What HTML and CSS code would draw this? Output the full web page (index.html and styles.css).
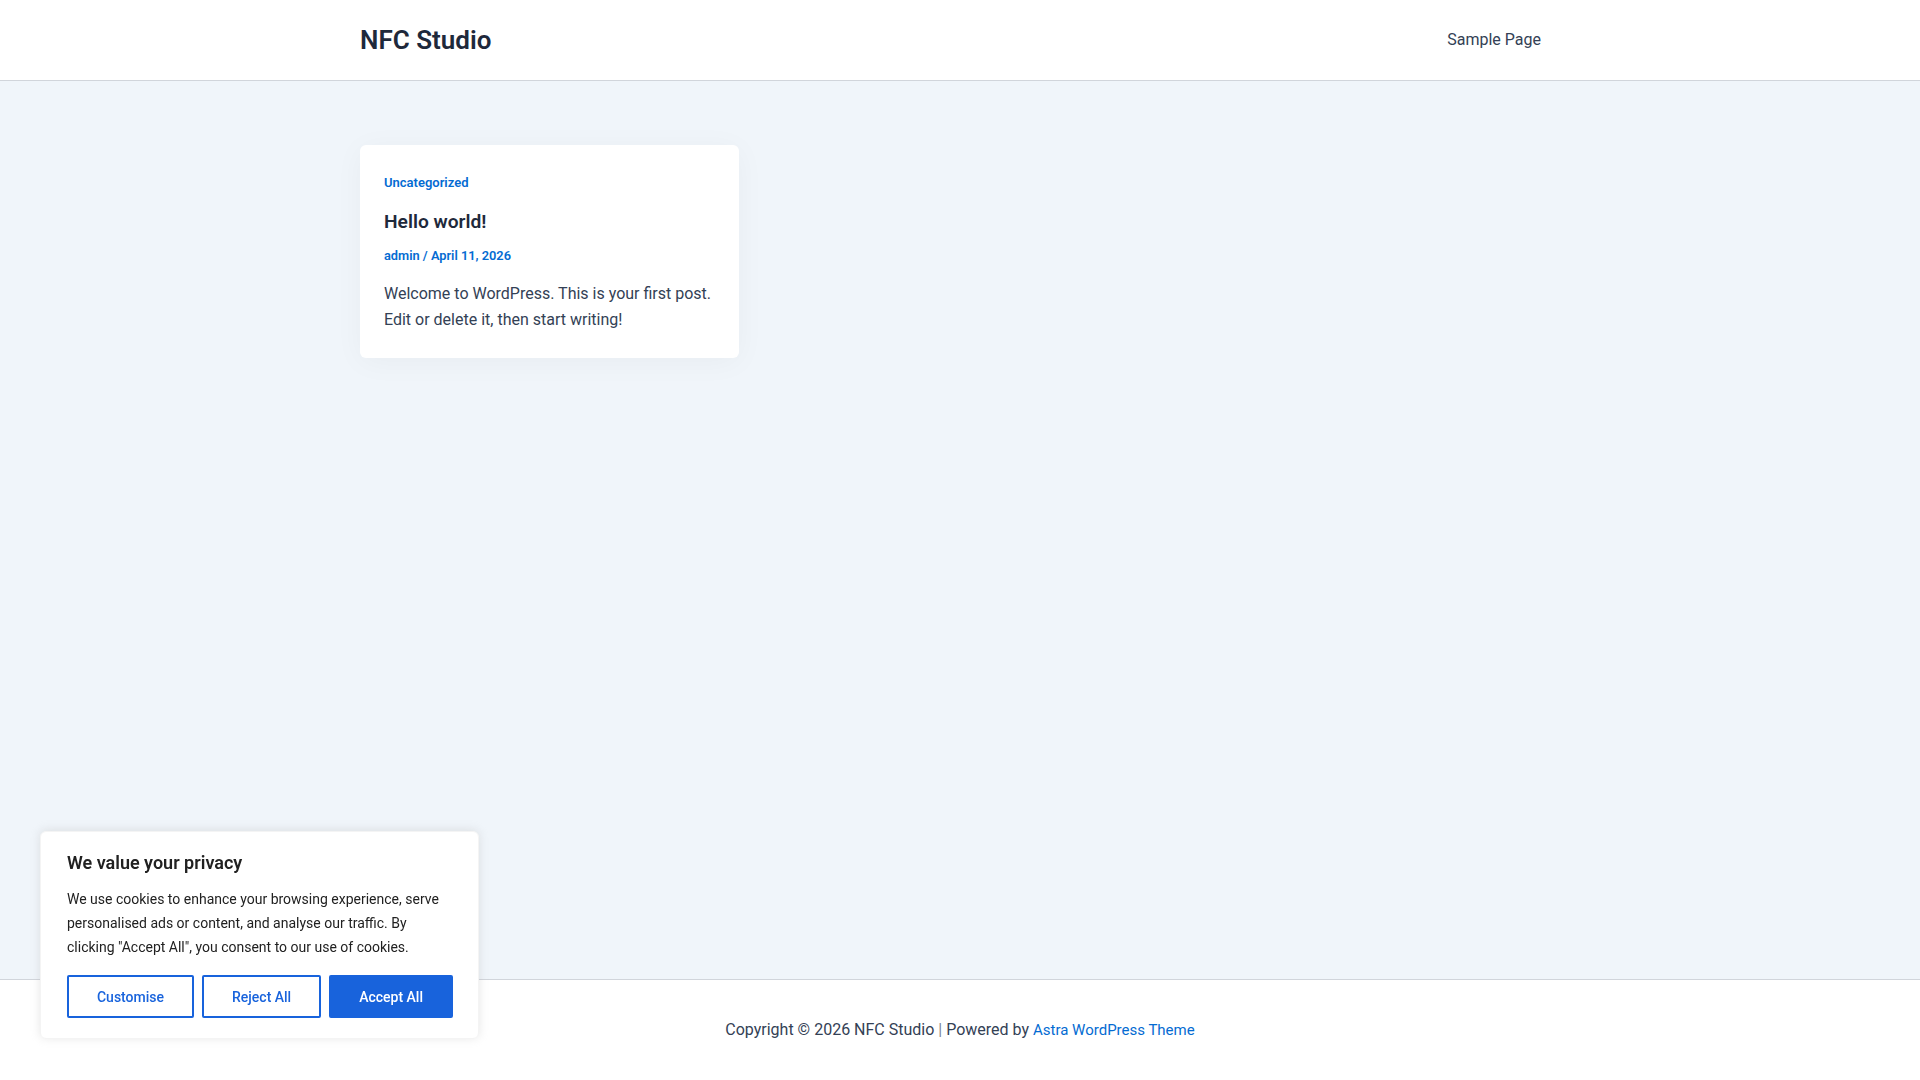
FILE: index.html
```html
<!DOCTYPE html>
<html lang="en-GB">
<head>
  <meta charset="UTF-8" />
  <meta name="viewport" content="width=device-width, initial-scale=1" />
  <title>NFC Studio</title>
  <link rel="stylesheet" href="styles.css">
</head>
<body>

<header class="site-header">
  <div class="header-inner">
    <a class="site-title" href="#">NFC Studio</a>
    <nav class="main-nav">
      <a href="#">Sample Page</a>
    </nav>
  </div>
</header>

<main class="site-content">
  <div class="posts">
    <article class="post-card">
      <div class="post-cat"><a href="#">Uncategorized</a></div>
      <h2 class="post-title"><a href="#">Hello world!</a></h2>
      <div class="post-meta"><a href="#">admin</a> / <a href="#">April 11, 2026</a></div>
      <p class="post-excerpt">Welcome to WordPress. This is your first post. Edit or delete it, then start writing!</p>
    </article>
  </div>
</main>

<footer class="site-footer">
  <p>Copyright &copy; 2026 NFC Studio <span class="sep">|</span> Powered by <a href="#">Astra WordPress Theme</a></p>
</footer>

<div class="cookie-bar">
  <p class="cookie-title">We value your privacy</p>
  <p class="cookie-text">We use cookies to enhance your browsing experience, serve personalised ads or content, and analyse our traffic. By clicking "Accept All", you consent to our use of cookies.</p>
  <div class="cookie-buttons">
    <button class="btn-outline">Customise</button>
    <button class="btn-outline">Reject All</button>
    <button class="btn-accept">Accept All</button>
  </div>
</div>

</body>
</html>
```

FILE: styles.css
```css
* {
  box-sizing: border-box;
}
body {
  margin: 0;
  min-height: 100vh;
  display: flex;
  flex-direction: column;
  font-family: Roboto, "Liberation Sans", sans-serif;
  font-size: 16px;
  color: #334155;
  background: #f0f5fa;
}
a {
  text-decoration: none;
  color: #046bd2;
}
.site-header {
  background: #fff;
  border-bottom: 1px solid #d1d5db;
}
.header-inner {
  max-width: 1200px;
  height: 80px;
  margin: 0 auto;
  display: flex;
  align-items: center;
  justify-content: space-between;
}
.site-title {
  font-size: 26px;
  font-weight: 600;
  color: #1e293b;
}
.main-nav {
  margin-top: -2px;
}
.main-nav a {
  color: #334155;
  font-size: 16px;
  padding: 0 19px 0 16px;
}
.site-content {
  flex: 1;
  padding-top: 64px;
}
.posts {
  max-width: 1200px;
  margin: 0 auto;
}
.post-card {
  width: 379px;
  background: #fff;
  border-radius: 6px;
  padding: 28px 24px 25px;
  box-shadow: 0 4px 30px rgba(0, 0, 0, 0.04);
}
.post-cat {
  font-size: 13px;
  font-weight: 600;
  line-height: 20px;
}
.post-title {
  margin: 16px 0 0;
  font-size: 19.2px;
  font-weight: 600;
  line-height: 26px;
}
.post-title a {
  color: #1e293b;
}
.post-meta {
  margin-top: 11px;
  font-size: 12.8px;
  font-weight: 600;
  color: #046bd2;
  line-height: 20px;
}
.post-excerpt {
  margin: 15px 0 0;
  line-height: 26px;
}
.site-footer {
  background: #fff;
  border-top: 1px solid #d1d5db;
  height: 101px;
  display: flex;
  align-items: center;
  justify-content: center;
  padding-bottom: 2px;
}
.site-footer p {
  margin: 0;
}
.site-footer a {
  font-size: 15px;
}
.site-footer .sep {
  color: #7c8594;
}
.cookie-bar {
  position: fixed;
  left: 40px;
  bottom: 41px;
  width: 439px;
  background: #fff;
  border: 1px solid #f4f4f4;
  border-radius: 6px;
  padding: 18px 25px 20px 26px;
  box-shadow: 0 -1px 10px rgba(172, 171, 171, 0.3);
  color: #212121;
}
.cookie-title {
  margin: 0;
  font-size: 18px;
  font-weight: 600;
  line-height: 26px;
}
.cookie-text {
  margin: 11px 0 0;
  font-size: 14px;
  line-height: 24px;
}
.cookie-buttons {
  display: flex;
  gap: 8px;
  margin-top: 16px;
}
.cookie-buttons button {
  flex: auto;
  height: 43px;
  padding: 8px 27px;
  font-family: inherit;
  font-size: 14px;
  font-weight: 500;
  border: 2px solid #1863dc;
  border-radius: 2px;
  cursor: pointer;
}
.btn-outline {
  background: #fff;
  color: #1863dc;
}
.btn-accept {
  background: #1863dc;
  color: #fff;
}
```
